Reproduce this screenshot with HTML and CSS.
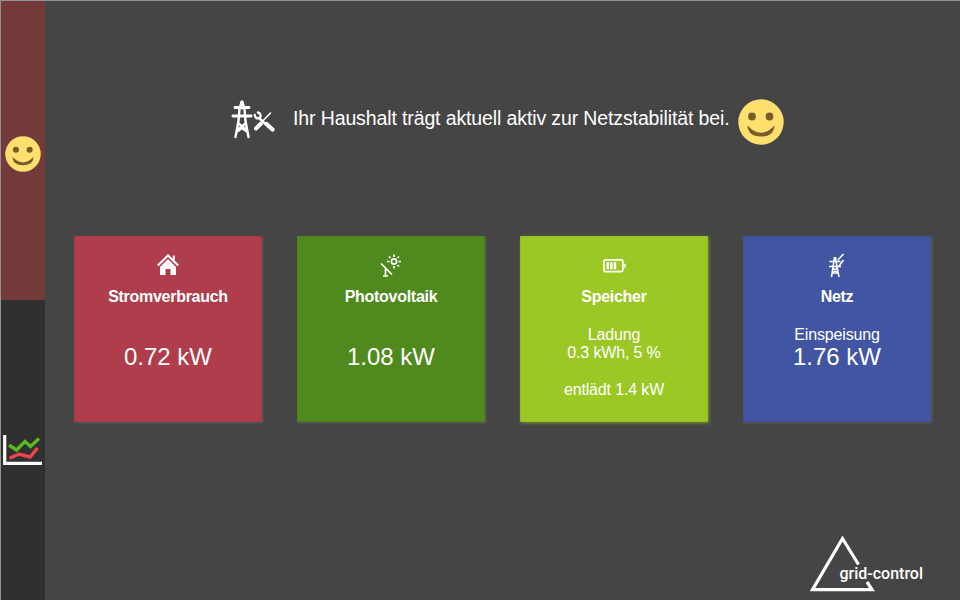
FILE: index.html
```html
<!DOCTYPE html>
<html lang="de">
<head>
<meta charset="utf-8">
<title>grid-control</title>
<link rel="stylesheet" href="styles.css">
</head>
<body>
<div class="app">
  <nav class="sidebar">
    <a class="tab tab-active">
      <svg class="tab-smiley" viewBox="0 0 46 46"><circle cx="23" cy="23" r="22.700" fill="#ffdf6d"/><circle cx="14" cy="17.500" r="3.900" fill="#7a5c2b"/><circle cx="31.500" cy="17.500" r="3.900" fill="#7a5c2b"/><path d="M9.500 26.500Q23 41 36.500 26.500Q36 37.500 23 37.500T9.500 26.500Z" fill="#7a5c2b"/></svg>
    </a>
    <a class="tab">
      <svg class="tab-chart" viewBox="0 0 39 31"><path d="M1.700 0V28.300H39" fill="none" stroke="#fff" stroke-width="3.200"/><path d="M6 10 13.500 15 22 6.500 27.500 11.500 36 3.500" fill="none" stroke="#5bb922" stroke-width="3.400"/><path d="M6.500 23.200 16 19 27 22 34.500 13" fill="none" stroke="#ef4549" stroke-width="3.400"/></svg>
    </a>
  </nav>
  <main class="content">
    <header class="status">
      <svg class="status-grid" viewBox="0 0 44 40" fill="none" stroke="#fff" stroke-linecap="round"><path d="M10.500 2 8.500 9 7.500 21 4.500 37M11.500 2 13.500 9 14.500 21 17.500 37M7 23 16.500 31M15 23 5.500 31M5.500 32 11 28 16.500 32" stroke-width="2.400"/><path d="M4 7.500H18M2 16H20M11 2V8" stroke-width="2.900"/><path d="M39.500 13 25.500 27.500" stroke-width="1.600"/><path d="M30 23.500 25 28.500" stroke-width="3.900"/><path d="M28 18 35 24.500" stroke-width="2.400"/><path d="M35.500 24 41.500 29.500" stroke-width="4.300"/><path d="M23.800 15A3.200 3.200 0 0 0 28.500 18A3.200 3.200 0 0 0 27 12.500" stroke-width="2.400"/></svg>
      <p class="status-text">Ihr Haushalt trägt aktuell aktiv zur Netzstabilität bei.</p>
      <svg class="status-smiley" viewBox="0 0 46 46"><circle cx="23" cy="23" r="22.700" fill="#ffdf6d"/><circle cx="14" cy="17.500" r="3.900" fill="#7a5c2b"/><circle cx="31.500" cy="17.500" r="3.900" fill="#7a5c2b"/><path d="M9.500 26.500Q23 41 36.500 26.500Q36 37.500 23 37.500T9.500 26.500Z" fill="#7a5c2b"/></svg>
    </header>
    <section class="cards">
      <article class="card usage">
        <svg class="card-icon" viewBox="0 0 24 24"><path d="M4 14 12 6 20 14V22H14.500V16H9.500V22H4Z" fill="#fff"/><path d="M1.800 12.500 12 2.500 22.200 12.500M17.800 2.500V7" fill="none" stroke="#fff" stroke-width="2"/></svg>
        <h2>Stromverbrauch</h2>
        <p class="value">0.72 kW</p>
      </article>
      <article class="card solar">
        <svg class="card-icon" viewBox="0 0 24 24" fill="none" stroke="#fff" stroke-width="1.700"><circle cx="15" cy="8.500" r="2.600"/><path d="M15 1.500V4M15 13V15.500M8 8.500H10.500M19.500 8.500H22M10 3.500 11.500 5M18.500 12 20 13.500M20 3.500 18.500 5M2 10.500 13 21.500M6.500 15V23M4 23H9"/></svg>
        <h2>Photovoltaik</h2>
        <p class="value">1.08 kW</p>
      </article>
      <article class="card storage">
        <svg class="card-icon" viewBox="0 0 24 24"><rect x="1.900" y="6.800" width="19" height="11.800" rx="1.600" fill="none" stroke="#fff" stroke-width="1.700"/><path d="M4.500 9.300H7V16.300H4.500ZM8.100 9.300H10.600V16.300H8.100ZM11.700 9.300H14.200V16.300H11.700ZM22.200 10.700H23.700V14.700H22.200Z" fill="#fff"/></svg>
        <h2>Speicher</h2>
        <p class="detail">Ladung<br>0.3 kWh, 5 %<br><br>entlädt 1.4 kW</p>
      </article>
      <article class="card grid">
        <svg class="card-icon" viewBox="0 0 24 24" fill="none" stroke="#fff" stroke-width="1.600"><path d="M9.500 4 8 14 6.500 24M10.500 4 12 14 14 24M4.500 8.500H15.500M4 13.500H16M8 15 13 20M12 15 7 20M7 20H13M13 7 18.500 1M14 13 18.500 7"/></svg>
        <h2>Netz</h2>
        <p class="detail">Einspeisung</p>
        <p class="feed">1.76 kW</p>
      </article>
    </section>
    <footer class="brand">
      <svg class="logo" viewBox="0 0 120 58"><path d="M48.500 29.500 32.500 3.500 2.500 54.600H62L57 47" fill="none" stroke="#fff" stroke-width="3.200"/><text x="29.500" y="44" textLength="83.500" lengthAdjust="spacingAndGlyphs">grid-control</text></svg>
    </footer>
  </main>
</div>
</body>
</html>
```
FILE: styles.css
```css
* { box-sizing: border-box; margin: 0; padding: 0; }
body { background: #454545; color: #fff; font-family: "Liberation Sans", Arial, sans-serif; }
.app { display: flex; width: 960px; height: 600px; overflow: hidden; border-top: 1px solid #929292; border-left: 1px solid #929292; }
.sidebar { width: 44px; display: flex; flex-direction: column; background: #303030; }
.tab { display: flex; align-items: center; justify-content: center; height: 300px; }
.tab-active { height: 299px; background: #743a39; padding: 7px 1px 0 0; }
.tab-smiley { width: 36px; height: 36px; }
.tab-chart { width: 39px; height: 31px; margin: 1px 1px 0 0; }
.content { flex: 1; display: flex; flex-direction: column; }
.status { height: 235px; padding: 97px 0 0 186px; display: flex; align-items: flex-start; }
.status-grid { width: 44px; height: 40px; margin-top: 2px; }
.status-text { width: 437px; margin: 9px 8px 0 18px; font-size: 19.5px; letter-spacing: -.12px; line-height: 22px; white-space: nowrap; }
.status-smiley { width: 46px; height: 46px; margin-top: 1px; }
.cards { display: grid; grid-template-columns: repeat(4, 188px); gap: 35px; padding-left: 29px; height: 187px; }
.card { display: flex; flex-direction: column; align-items: center; height: 186px; padding-top: 17px; text-align: center; box-shadow: 1px 1px 2px rgba(255, 255, 255, .14), inset 0 0 1px rgba(0, 0, 0, .5); }
.usage { background: #b03d4b; }
.solar { background: #50891e; }
.storage { background: #9cc825; box-shadow: 1px 1px 3px rgba(156, 200, 37, .6), inset 0 0 1px rgba(0, 0, 0, .5); }
.grid { background: #4255a3; }
.card-icon { width: 24px; height: 24px; }
.card h2 { margin-top: 11px; font-size: 16px; letter-spacing: -.28px; line-height: 18px; }
.value { margin-top: 37px; font-size: 24px; line-height: 28px; }
.detail { margin-top: 20px; font-size: 16px; letter-spacing: -.15px; line-height: 18.400px; }
.feed { font-size: 24px; line-height: 26px; }
.brand { flex: 1; display: flex; align-items: flex-end; justify-content: flex-end; padding: 0 30px 7px 0; }
.logo { width: 120px; height: 58px; overflow: visible; }
.logo text { fill: #fff; font: 500 17px Roboto, sans-serif; }
```
